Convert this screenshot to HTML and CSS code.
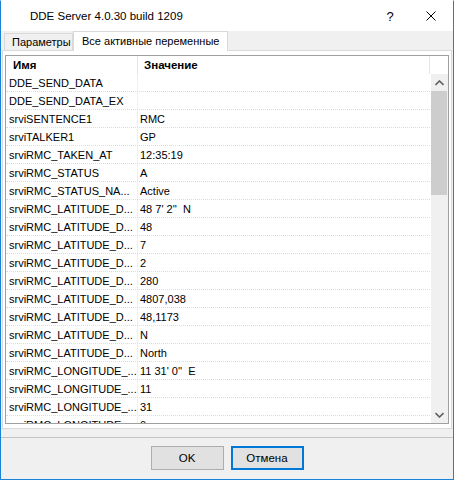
FILE: index.html
```html
<!DOCTYPE html>
<html>
<head>
<meta charset="utf-8">
<link rel="stylesheet" href="styles.css">
</head>
<body>
<div class="window">
  <div class="titlebar">
    <div class="title">DDE Server 4.0.30 build 1209</div>
    <div class="tb-help">?</div>
    <div class="tb-close">
      <svg width="10" height="10" viewBox="0 0 10 10"><path d="M0.5 0.5 L9.5 9.5 M9.5 0.5 L0.5 9.5" stroke="#000" stroke-width="1" fill="none"/></svg>
    </div>
  </div>
  <div class="content">
    <div class="tabs">
      <div class="tab">Параметры</div>
      <div class="tab active">Все активные переменные</div>
    </div>
    <div class="panel">
      <div class="list">
        <div class="header">
          <div class="hcell c1">Имя</div>
          <div class="hcell c2">Значение</div>
        </div>
        <div class="body">
          <div class="rows">
            <div class="row"><div class="cell c1">DDE_SEND_DATA</div><div class="cell c2"></div></div>
            <div class="row"><div class="cell c1">DDE_SEND_DATA_EX</div><div class="cell c2"></div></div>
            <div class="row"><div class="cell c1">srviSENTENCE1</div><div class="cell c2">RMC</div></div>
            <div class="row"><div class="cell c1">srviTALKER1</div><div class="cell c2">GP</div></div>
            <div class="row"><div class="cell c1">srviRMC_TAKEN_AT</div><div class="cell c2">12:35:19</div></div>
            <div class="row"><div class="cell c1">srviRMC_STATUS</div><div class="cell c2">A</div></div>
            <div class="row"><div class="cell c1">srviRMC_STATUS_NA...</div><div class="cell c2">Active</div></div>
            <div class="row"><div class="cell c1">srviRMC_LATITUDE_D...</div><div class="cell c2">48 7' 2''  N</div></div>
            <div class="row"><div class="cell c1">srviRMC_LATITUDE_D...</div><div class="cell c2">48</div></div>
            <div class="row"><div class="cell c1">srviRMC_LATITUDE_D...</div><div class="cell c2">7</div></div>
            <div class="row"><div class="cell c1">srviRMC_LATITUDE_D...</div><div class="cell c2">2</div></div>
            <div class="row"><div class="cell c1">srviRMC_LATITUDE_D...</div><div class="cell c2">280</div></div>
            <div class="row"><div class="cell c1">srviRMC_LATITUDE_D...</div><div class="cell c2">4807,038</div></div>
            <div class="row"><div class="cell c1">srviRMC_LATITUDE_D...</div><div class="cell c2">48,1173</div></div>
            <div class="row"><div class="cell c1">srviRMC_LATITUDE_D...</div><div class="cell c2">N</div></div>
            <div class="row"><div class="cell c1">srviRMC_LATITUDE_D...</div><div class="cell c2">North</div></div>
            <div class="row"><div class="cell c1">srviRMC_LONGITUDE_...</div><div class="cell c2">11 31' 0''  E</div></div>
            <div class="row"><div class="cell c1">srviRMC_LONGITUDE_...</div><div class="cell c2">11</div></div>
            <div class="row"><div class="cell c1">srviRMC_LONGITUDE_...</div><div class="cell c2">31</div></div>
            <div class="row"><div class="cell c1">srviRMC_LONGITUDE_...</div><div class="cell c2">0</div></div>
          </div>
          <div class="scrollbar">
            <div class="sb-btn">
              <svg width="9" height="6" viewBox="0 0 9 6"><path d="M0.5 5 L4.5 1 L8.5 5" stroke="#606060" stroke-width="1.6" fill="none"/></svg>
            </div>
            <div class="sb-track">
              <div class="sb-thumb"></div>
            </div>
            <div class="sb-btn">
              <svg width="9" height="6" viewBox="0 0 9 6"><path d="M0.5 1 L4.5 5 L8.5 1" stroke="#606060" stroke-width="1.6" fill="none"/></svg>
            </div>
          </div>
        </div>
      </div>
    </div>
  </div>
  <div class="footer">
    <div class="btn">OK</div>
    <div class="btn default">Отмена</div>
  </div>
</div>
</body>
</html>
```
FILE: styles.css
```css
html, body {
  margin: 0;
  padding: 0;
  background: #f0f0f0;
}
.window {
  box-sizing: border-box;
  width: 454px;
  height: 480px;
  border: 1px solid #1883d7;
  border-top-color: #ffffff;
  display: flex;
  flex-direction: column;
  background: #f0f0f0;
  font-family: "Liberation Sans", Arial, sans-serif;
  overflow: hidden;
}
.titlebar {
  flex-shrink: 0;
  height: 30px;
  background: #ffffff;
  display: flex;
  align-items: center;
  font-size: 11.5px;
  color: #000;
}
.title {
  padding-left: 29px;
  flex: 1;
}
.tb-help {
  width: 20px;
  text-align: center;
  font-size: 13px;
  margin-right: 26px;
}
.tb-close {
  width: 10px;
  height: 10px;
  margin-right: 17px;
  display: flex;
}
.content {
  flex: 1;
  min-height: 0;
  display: flex;
  flex-direction: column;
  padding: 0 1px 8px 1px;
}
.tabs {
  flex-shrink: 0;
  display: flex;
  align-items: flex-end;
  height: 19px;
  padding-left: 2px;
  font-size: 11px;
  position: relative;
  z-index: 1;
}
.tab {
  box-sizing: border-box;
  height: 17px;
  border: 1px solid #d9d9d9;
  border-bottom: none;
  background: #f0f0f0;
  padding: 0 0 0 7px;
  width: 69px;
  line-height: 17px;
}
.tab.active {
  height: 20px;
  width: 155px;
  margin-bottom: -1px;
  background: #ffffff;
  padding-left: 8px;
  line-height: 18px;
}
.panel {
  flex: 1;
  min-height: 0;
  background: #ffffff;
  border: 1px solid #d9d9d9;
  padding: 4px 2px 4px 2px;
  display: flex;
}
.list {
  flex: 1;
  min-height: 0;
  border: 1px solid #a0a0a0;
  background: #ffffff;
  display: flex;
  flex-direction: column;
  font-size: 11px;
  color: #000;
  overflow: hidden;
}
.header {
  flex-shrink: 0;
  height: 18px;
  display: flex;
  font-weight: bold;
  font-size: 11.5px;
}
.hcell {
  box-sizing: border-box;
  height: 18px;
  line-height: 19px;
}
.hcell.c1 {
  width: 132px;
  padding-left: 7px;
  border-right: 1px solid #e5e5e5;
}
.hcell.c2 {
  width: 292px;
  padding-left: 6px;
  border-right: 1px solid #e5e5e5;
}
.body {
  flex: 1;
  display: flex;
  min-height: 0;
}
.rows {
  width: 425px;
  overflow: hidden;
}
.row {
  box-sizing: border-box;
  height: 18px;
  display: flex;
  border-bottom: 1px dotted #dcdcdc;
}
.cell {
  box-sizing: border-box;
  height: 17px;
  line-height: 18px;
  white-space: pre;
}
.cell.c1 {
  width: 132px;
  padding-left: 3px;
  border-right: 1px solid #f0f0f0;
}
.cell.c2 {
  width: 292px;
  padding-left: 2px;
}
.scrollbar {
  width: 17px;
  margin-left: 1px;
  background: #f0f0f0;
  display: flex;
  flex-direction: column;
}
.sb-btn {
  flex-shrink: 0;
  height: 17px;
  display: flex;
  align-items: center;
  justify-content: center;
}
.sb-track {
  flex: 1;
}
.sb-thumb {
  height: 104px;
  background: #cdcdcd;
  margin: 0 1px 0 0;
}
.footer {
  flex-shrink: 0;
  border-top: 1px solid #c4c4c4;
  height: 42px;
  display: flex;
  justify-content: center;
  align-items: flex-start;
  gap: 7px;
  padding-top: 8px;
  box-sizing: border-box;
}
.btn {
  box-sizing: border-box;
  width: 73px;
  height: 24px;
  border: 1px solid #adadad;
  background: #e1e1e1;
  font-size: 11.5px;
  text-align: center;
  line-height: 22px;
  color: #000;
}
.btn.default {
  border: 2px solid #0078d7;
  line-height: 20px;
}
```
